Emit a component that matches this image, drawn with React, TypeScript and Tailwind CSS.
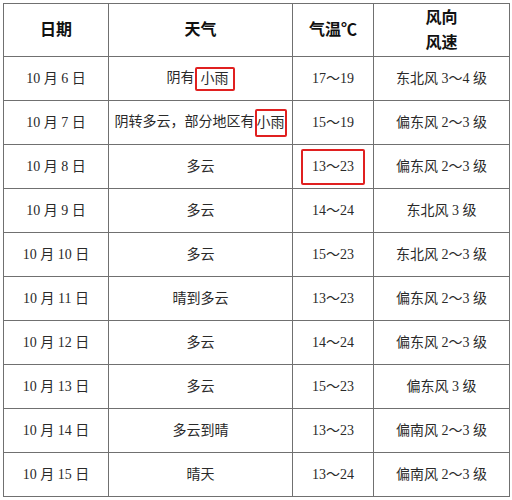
const rows: { date: string; weather: React.ReactNode; temp: React.ReactNode; wind: string }[] = [
  {
    date: "10 月 6 日",
    weather: (
      <>
        阴有
        <span className="inline-flex h-[24px] items-center rounded-[2px] border-2 border-[#e02020] px-[4px] align-middle">小雨</span>
      </>
    ),
    temp: "17～19",
    wind: "东北风 3～4 级",
  },
  {
    date: "10 月 7 日",
    weather: (
      <>
        阴转多云，部分地区有
        <span className="inline-flex h-[28px] items-center rounded-[2px] border-2 border-[#e02020] px-[0px] align-middle">小雨</span>
      </>
    ),
    temp: "15～19",
    wind: "偏东风 2～3 级",
  },
  {
    date: "10 月 8 日",
    weather: "多云",
    temp: (
      <span className="inline-flex h-[36px] w-[64px] items-center justify-center rounded-[2px] border-2 border-[#e02020] align-middle">
        13～23
      </span>
    ),
    wind: "偏东风 2～3 级",
  },
  { date: "10 月 9 日", weather: "多云", temp: "14～24", wind: "东北风 3 级" },
  { date: "10 月 10 日", weather: "多云", temp: "15～23", wind: "东北风 2～3 级" },
  { date: "10 月 11 日", weather: "晴到多云", temp: "13～23", wind: "偏东风 2～3 级" },
  { date: "10 月 12 日", weather: "多云", temp: "14～24", wind: "偏东风 2～3 级" },
  { date: "10 月 13 日", weather: "多云", temp: "15～23", wind: "偏东风 3 级" },
  { date: "10 月 14 日", weather: "多云到晴", temp: "13～23", wind: "偏南风 2～3 级" },
  { date: "10 月 15 日", weather: "晴天", temp: "13～24", wind: "偏南风 2～3 级" },
];

const cell = "border border-[#707070] text-center align-middle p-0";

export default function App() {
  return (
    <div
      className="h-[500px] w-[512px] bg-white pl-[3px] pt-[3px] text-[14px] text-[#2a2a2a]"
      style={{ fontFamily: '"Liberation Serif", "Noto Sans CJK SC", serif' }}
    >
      <table className="w-[506px] table-fixed border-collapse">
        <colgroup>
          <col className="w-[105px]" />
          <col className="w-[184px]" />
          <col className="w-[81px]" />
          <col className="w-[136px]" />
        </colgroup>
        <thead>
          <tr className="h-[53px] text-[16px] font-bold leading-[20px] text-[#111]">
            <th className={cell}>日期</th>
            <th className={cell}>天气</th>
            <th className={cell}>气温℃</th>
            <th className={`${cell} leading-[25px]`}>
              风向
              <br />
              风速
            </th>
          </tr>
        </thead>
        <tbody>
          {rows.map((r) => (
            <tr key={r.date} className="h-[44px]">
              <td className={cell}>{r.date}</td>
              <td className={`${cell} whitespace-nowrap`}>{r.weather}</td>
              <td className={cell}>{r.temp}</td>
              <td className={cell}>{r.wind}</td>
            </tr>
          ))}
        </tbody>
      </table>
    </div>
  );
}
